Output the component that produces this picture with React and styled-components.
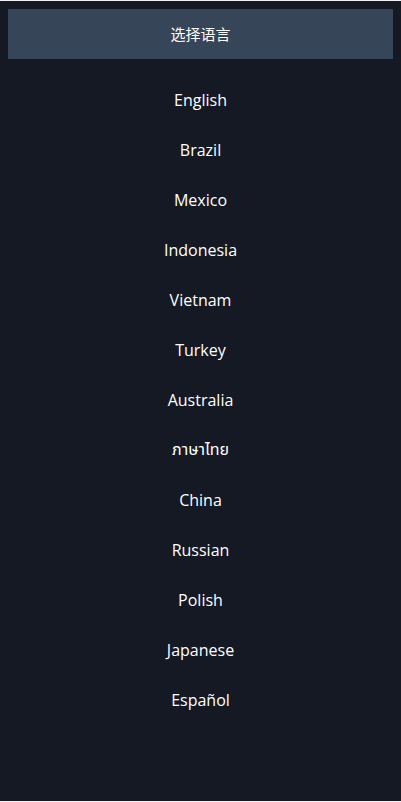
import React from "react";
import styled, { createGlobalStyle } from "styled-components";

const languages = [
  "English",
  "Brazil",
  "Mexico",
  "Indonesia",
  "Vietnam",
  "Turkey",
  "Australia",
  "ภาษาไทย",
  "China",
  "Russian",
  "Polish",
  "Japanese",
  "Español",
];

const GlobalStyle = createGlobalStyle`
  html, body {
    margin: 0;
    padding: 0;
    background: #f0f2f5;
  }
  body {
    font-family: "Open Sans", "Noto Sans", "Noto Sans CJK SC", "Noto Sans Thai", sans-serif;
  }
`;

const Panel = styled.div`
  margin-top: 1px;
  height: 800px;
  box-sizing: border-box;
  padding: 8px;
  background: #151924;
  display: flex;
  flex-direction: column;
`;

const Header = styled.div`
  height: 50px;
  display: flex;
  align-items: center;
  justify-content: center;
  padding-bottom: 2px;
  box-sizing: border-box;
  background: #374559;
  color: #fff;
  font-size: 15px;
  font-family: "Noto Sans CJK SC", sans-serif;
`;

const List = styled.ul`
  list-style: none;
  margin: 0;
  padding: 16px 0 0;
`;

const Item = styled.li`
  height: 50px;
  display: flex;
  align-items: center;
  justify-content: center;
  color: #fff;
  font-size: 16px;
  cursor: pointer;
`;

const App = () => {
  return (
    <>
      <GlobalStyle />
      <Panel>
        <Header>选择语言</Header>
        <List>
          {languages.map((lang) => (
            <Item key={lang}>{lang}</Item>
          ))}
        </List>
      </Panel>
    </>
  );
};

export default App;
